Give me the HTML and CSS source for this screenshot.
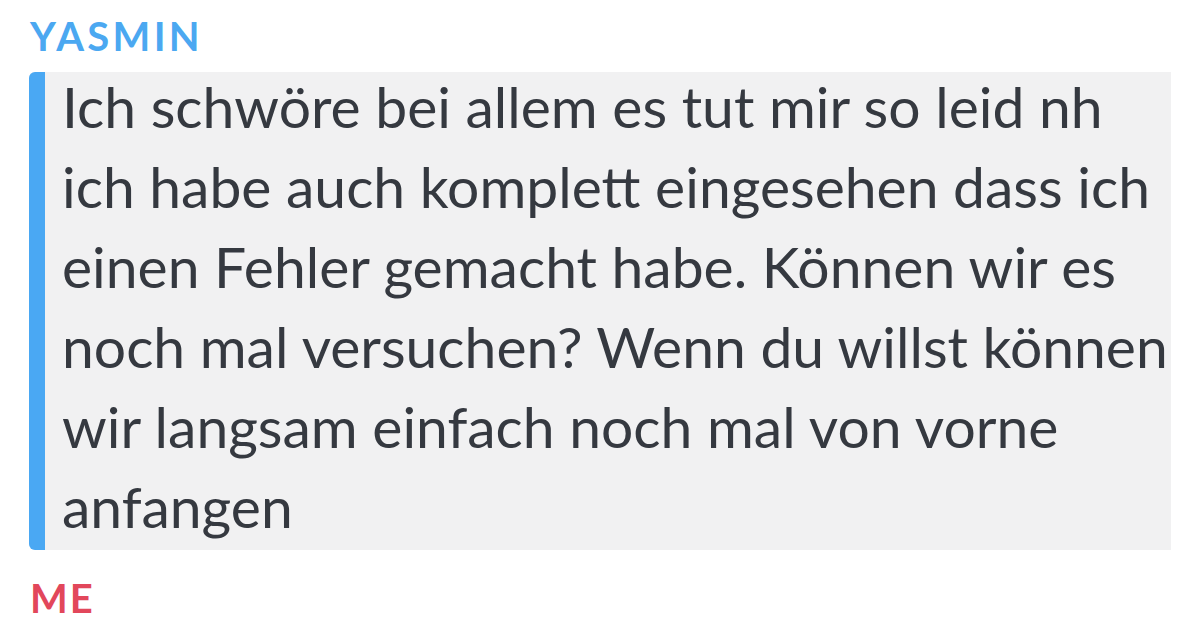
FILE: index.html
```html
<!DOCTYPE html>
<html lang="de">
<head>
<meta charset="utf-8">
<link rel="stylesheet" href="styles.css">
</head>
<body>
<div class="chat">
  <div class="sender sender-them">YASMIN</div>
  <div class="message">
    <div class="bar"></div>
    <p class="text">Ich schwöre bei allem es tut mir so leid nh<br>ich habe auch komplett eingesehen dass ich<br>einen Fehler gemacht habe. Können wir es<br>noch mal versuchen? Wenn du willst können<br>wir langsam einfach noch mal von vorne<br>anfangen</p>
  </div>
  <div class="sender sender-me">ME</div>
</div>
</body>
</html>
```

FILE: styles.css
```css
html, body {
  margin: 0;
  padding: 0;
  background: #ffffff;
}

.chat {
  width: 1200px;
  height: 630px;
  overflow: hidden;
  padding: 14px 29px 0 29px;
  box-sizing: border-box;
  font-family: Lato, "Open Sans", sans-serif;
}

.sender {
  font-weight: 700;
  font-size: 40px;
  line-height: 44px;
  letter-spacing: 3.3px;
  padding-left: 1px;
}

.sender-them {
  color: #4ba8f1;
  margin-bottom: 14px;
}

.sender-me {
  color: #e2475b;
  margin-top: 26px;
  letter-spacing: 2px;
}

.message {
  display: flex;
  background: #f1f1f2;
  border-radius: 6px 0 0 6px;
  overflow: hidden;
  height: 478px;
}

.bar {
  width: 16px;
  flex: none;
  background: #4aa8f3;
}

.text {
  margin: -6px 0 0 0;
  padding: 0 0 0 17px;
  font-size: 57px;
  line-height: 80px;
  color: #353940;
  white-space: nowrap;
}
```
